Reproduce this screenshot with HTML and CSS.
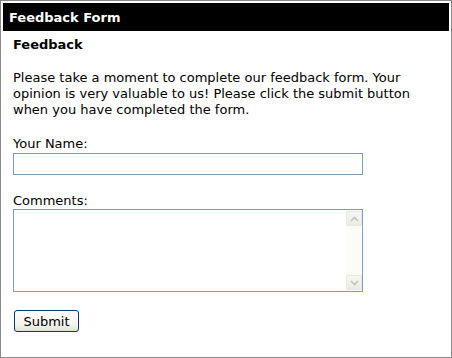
FILE: index.html
```html
<!DOCTYPE html>
<html lang="en">

<head>
    <meta charset="UTF-8">
    <title>Feedback Form</title>
    <link rel="stylesheet" href="styles.css">
</head>

<body>
    <div class="panel">
        <div class="panel-title">Feedback Form</div>

        <div class="panel-body">
            <h2 class="heading">Feedback</h2>

            <p class="intro">Please take a moment to complete our feedback form. Your opinion is very valuable to us! Please click the submit button when you have completed the form.</p>

            <div class="field">
                <label for="name">Your Name:</label>
                <input type="text" id="name" class="text-input">
            </div>

            <div class="field">
                <label for="comments">Comments:</label>
                <div class="comments-box">
                    <textarea id="comments" class="comments"></textarea>
                    <div class="scrollbar">
                        <div class="scroll-btn">
                            <svg width="9" height="6" viewBox="0 0 9 6"><path d="M1 5 L4.5 1.5 L8 5" fill="none" stroke="#c4c4bc" stroke-width="1.6"/></svg>
                        </div>
                        <div class="scroll-track"></div>
                        <div class="scroll-btn">
                            <svg width="9" height="6" viewBox="0 0 9 6"><path d="M1 1 L4.5 4.5 L8 1" fill="none" stroke="#c4c4bc" stroke-width="1.6"/></svg>
                        </div>
                    </div>
                </div>
            </div>

            <button class="btn" type="button">Submit</button>
        </div>
    </div>
</body>

</html>
```

FILE: styles.css
```css
/* Classic XP style feedback panel */
body {
    margin: 0;
    padding: 0;
    font-family: "DejaVu Sans", Verdana, sans-serif;
    font-size: 13px;
    line-height: 16px;
    color: #000;
    background: #fff;
}

.panel {
    width: 452px;
    height: 358px;
    box-sizing: border-box;
    border: 1px solid #8a8a8a;
    padding: 2px;
}

.panel-title {
    background-color: #000;
    color: #fff;
    font-weight: bold;
    height: 28px;
    line-height: 30px;
    padding: 0 6px;
}

.panel-body {
    padding: 0 10px;
}

.heading {
    margin: 6px 0 0;
    font-size: 13px;
    line-height: 16px;
    font-weight: bold;
}

.intro {
    margin: 17px 0 0;
}

.field {
    margin-top: 18px;
}

.field label {
    display: block;
    margin-bottom: 1px;
}

.text-input {
    display: block;
    width: 350px;
    height: 22px;
    box-sizing: border-box;
    margin: 0;
    border: 1px solid #7f9db9;
    padding: 2px 3px;
    font-family: inherit;
    font-size: 13px;
}

.comments-box {
    display: flex;
    width: 350px;
    height: 83px;
    box-sizing: border-box;
    border: 1px solid #7f9db9;
    margin-top: -1px;
}

.comments {
    flex: 1;
    border: none;
    margin: 0;
    padding: 2px 3px;
    resize: none;
    outline: none;
    font-family: inherit;
    font-size: 13px;
}

.scrollbar {
    width: 16px;
    display: flex;
    flex-direction: column;
    padding: 1px 0;
    background-color: #fbfbf7;
}

.scroll-btn {
    height: 15px;
    box-sizing: border-box;
    border: 1px solid #e9e8df;
    border-radius: 2px;
    background: linear-gradient(#f7f7f2, #ecebe3);
    display: flex;
    align-items: center;
    justify-content: center;
}

.scroll-track {
    flex: 1;
}

.btn {
    display: block;
    margin-top: 18px;
    margin-left: 1px;
    width: 65px;
    height: 22px;
    padding: 0;
    font-family: inherit;
    font-size: 13px;
    color: #000;
    border: 1px solid #003c74;
    border-radius: 3px;
    background: linear-gradient(#ffffff, #f3f2ec 70%, #e3e1d6);
    cursor: pointer;
}
```
